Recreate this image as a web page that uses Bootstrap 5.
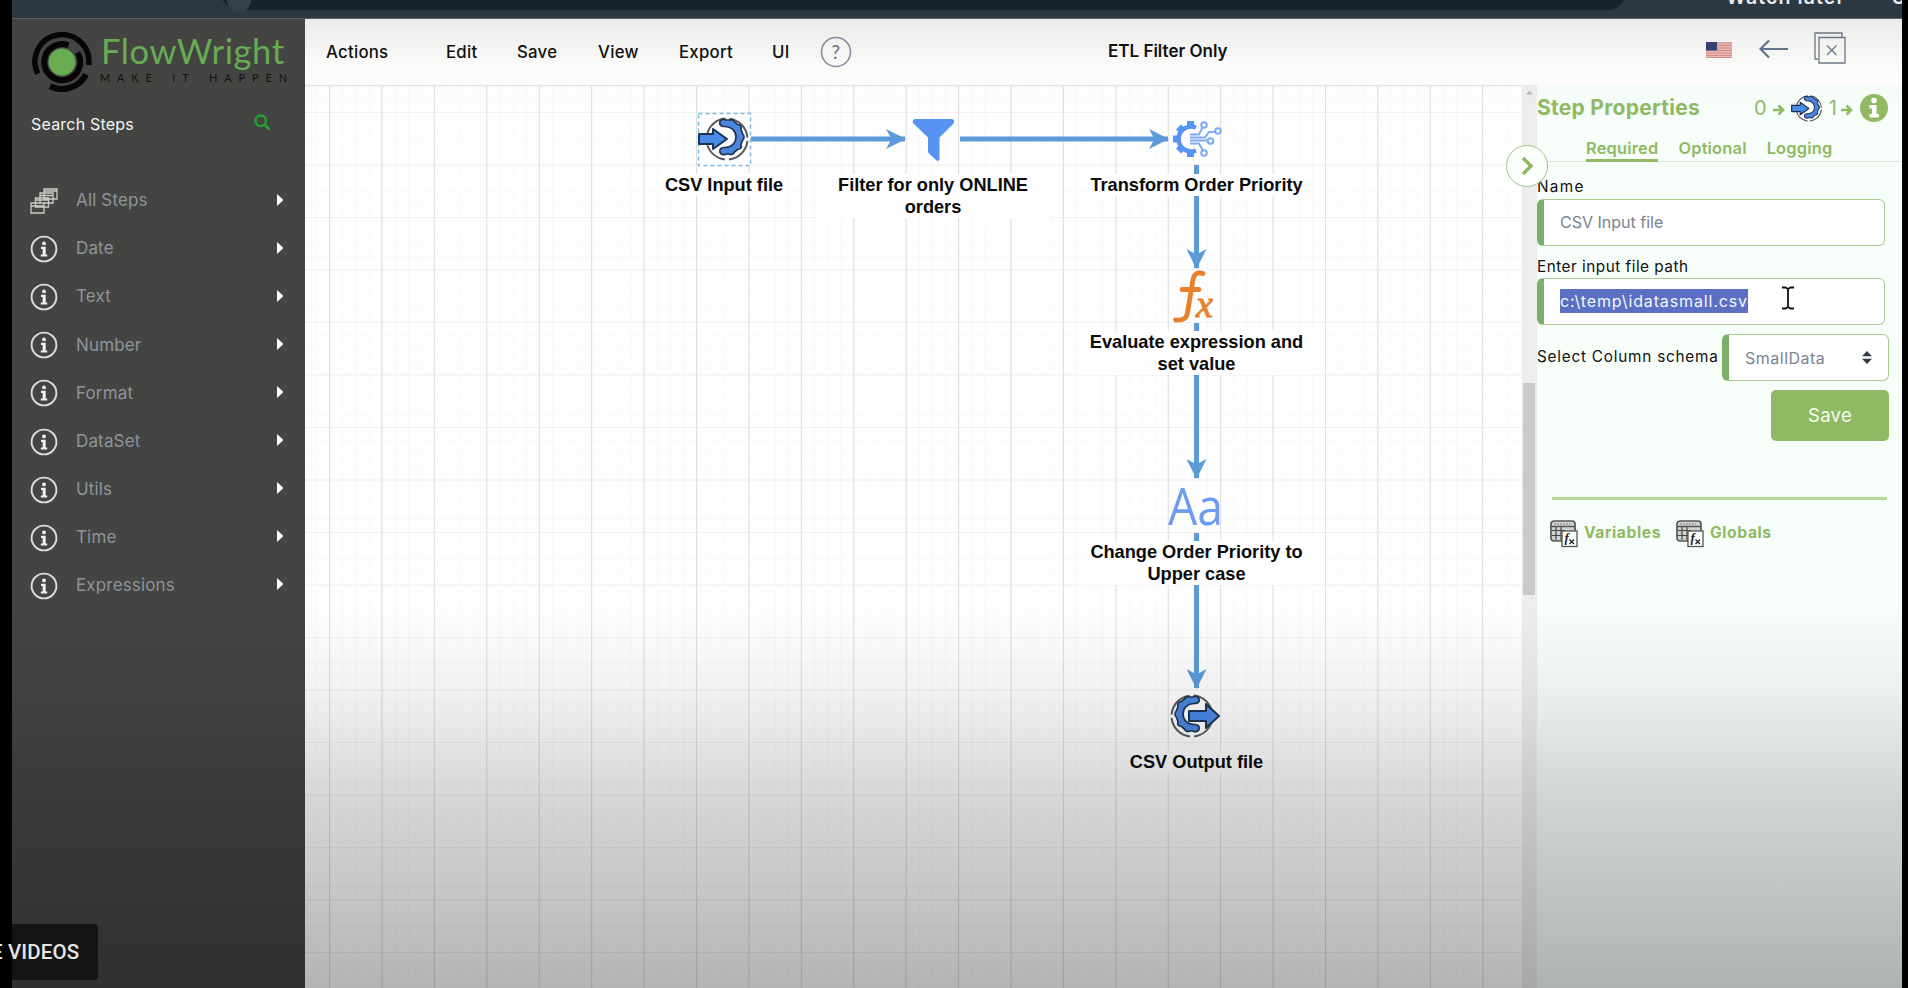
<!DOCTYPE html>
<html lang="en">
<head>
<meta charset="utf-8">
<meta name="viewport" content="width=device-width, initial-scale=1">
<title>FlowWright - ETL Filter Only</title>
<link href="https://cdn.jsdelivr.net/npm/bootstrap@5.3.0/dist/css/bootstrap.min.css" rel="stylesheet">
<style>
  :root { --leaf: #8fba63; --edge: #5b9bd9; }
  body { width: 1908px; height: 988px; overflow: hidden; background: #000; font-family: Inter, "Open Sans", sans-serif; font-size: 17px; color: #111; }
  .stage { width: 1890px; height: 988px; margin-left: 12px; }
  .browser-bar { height: 19px; background: #2c3841; overflow: hidden; border-bottom: 1px solid #59636a; }
  .address { width: 1407px; height: 40px; margin: -30px 0 0 208px; border-radius: 20px; background: #16232b; }
  .address-dot { width: 24px; height: 24px; border-radius: 50%; background: #33414b; margin: 18px 0 0 7px; }
  .watch { color: #e9ecee; font-weight: 600; font-size: 19.500px; line-height: 22px; margin: -14px 0 0 99px; white-space: nowrap; letter-spacing: 1.1px; }
  .share { margin-left: 47px; }
  .steps-bar { width: 293px; background: #444542; }
  .brand-row { height: 80px; padding: 13px 0 0 20px; }
  .brand-name { font-family: Lato, sans-serif; font-size: 34.500px; line-height: 40px; color: #67ab52; letter-spacing: .6px; margin: -1px 0 0 9px; }
  .brand-tag { font-family: Lato, sans-serif; font-size: 11px; line-height: 12px; color: #111; letter-spacing: 6.85px; word-spacing: 4px; margin: 1px 0 0 8px; white-space: nowrap; }
  .search-row { height: 49px; padding: 0 34px 0 19px; color: #f4f4f4; font-size: 16px; letter-spacing: .2px; }
  .step-list { padding-top: 29px; }
  .step-item { height: 48.1px; padding: 0 21px 0 18px; color: #8d949c; }
  .step-item span { margin-left: 18px; letter-spacing: .15px; }
  .step-item svg.ms-auto { margin-top: -3px; }
  .menu-bar { height: 66px; background: #fefefd; }
  .menus { display: grid; grid-template-columns: 120px 71px 81px 81px 93px 48px 32px; padding-left: 21px; width: 803px; line-height: 24px; letter-spacing: .25px; font-weight: 500; font-size: 16.800px; }
  .canvas { width: 1217px; position: relative; overflow: hidden; background-color: #fdfefd; border-top: 1px solid #e3e5e3; }
  .canvas > svg { position: absolute; left: 0; top: -1px; }
  .step-label { position: absolute; width: 234px; transform: translateX(-50%); text-align: center; font: bold 18.2px/22px "Liberation Sans", Arial, sans-serif; color: #0b0b0b; }
  .step-label span { display: inline-block; background: #fdfefd; padding: 0 2px; }
  .step-label.wide span { width: 234px; padding: 0; }
  .rail { width: 15px; background: #ebeeed; }
  .thumb { width: 12px; height: 212px; margin: 298px 0 0 1px; background: #c9cac9; }
  .props { background: #f7fdf9; position: relative; font-size: 15.3px; }
  .toggle { position: absolute; left: -31px; top: 60px; width: 42px; height: 42px; border-radius: 50%; background: #fdfffc; border: 1.5px solid #a3c584; display: flex; align-items: center; justify-content: center; z-index: 3; }
  .props-head { height: 46px; color: var(--leaf); }
  .props-title { font-weight: 700; font-size: 21px; width: 217px; letter-spacing: .28px; }
  .props-count { font-size: 20px; }
  .tab-row { height: 31px; border-bottom: 1px solid #dbe7dc; padding-left: 49px; gap: 20px; color: var(--leaf); font-weight: 600; font-size: 16.4px; line-height: 22px; letter-spacing: .2px; }
  .tab-row div { height: 31px; padding-top: 6px; white-space: nowrap; }
  .tab-row .on { border-bottom: 3px solid var(--leaf); }
  .lbl { line-height: 20px; letter-spacing: .5px; }
  .lbl-name { letter-spacing: 1.3px; }
  .schema { letter-spacing: .78px; white-space: nowrap; }
  .field { width: 348px; height: 47px; background: #fff; border: 1.5px solid #a9cb90; border-left: 7px solid #7bb069; border-radius: 6px; padding-left: 16px; color: #7b8394; font-size: 16px; }
  .picked { background: #5b70c4; color: #f4f6ff; line-height: 24px; letter-spacing: .87px; }
  .btn-save { width: 118px; height: 51px; margin-left: 234px; background: var(--leaf); color: #f6fbf0; font-size: 18.500px; letter-spacing: .3px; border: 0; border-radius: 5px; }
  .rule { height: 3px; width: 335px; margin: 56px 0 0 15px; background: #b7d890; }
  .links { color: var(--leaf); font-weight: 700; font-size: 15.7px; letter-spacing: .55px; padding: 20px 0 0 13px; }
  .shade-top, .shade-bottom { position: absolute; left: 305px; right: 6px; pointer-events: none; z-index: 5; }
  .shade-top { top: 19px; height: 90px; background: linear-gradient(rgba(0,0,0,.08), rgba(0,0,0,.015) 50%, transparent); }
  .shade-bottom { left: 12px; bottom: 0; height: 380px; background: linear-gradient(transparent, rgba(0,0,0,.05) 22%, rgba(0,0,0,.15) 48%, rgba(0,0,0,.29)); }
  .more { position: absolute; left: 0; top: 924px; width: 98px; height: 56px; background: linear-gradient(90deg, #000 12px, #141414 12px); border-radius: 0 4px 4px 0; z-index: 6; overflow: hidden; color: #e6e6e4; font: 500 20.5px/56px Roboto, sans-serif; white-space: nowrap; }
  .more span { margin-left: -9px; letter-spacing: .15px; }
</style>
</head>
<body>
<svg width="0" height="0" class="position-absolute">
  <defs>
    <symbol id="info" viewBox="0 0 28 28"><circle cx="14" cy="14" r="12.4" fill="none" stroke="#dcdedb" stroke-width="1.9"/><circle cx="14" cy="8.4" r="1.9" fill="#f0f0ee"/><path d="M11 11.8h4.7v7.7h1.6v2H10.8v-2h1.8v-5.6H11z" fill="#f0f0ee"/></symbol>
    <symbol id="caret" viewBox="0 0 7 12"><path d="M0 0l6.500 6-6.500 6z" fill="#fff"/></symbol>
    <g id="gear-base">
      <circle r="20.500" fill="#fdfefd" stroke="#5b5b5b" stroke-width="2" stroke-dasharray="28 4.200" stroke-dashoffset="-2"/>
      <path d="M-7-15.500c1-2 4-3 6-1.500h3c2-1 5 0 5.500 2l3 2.500c3 0 4.500 2 3.500 5l1.500 4c2 2 2 5 0 7l-1.500 4c1 3-.500 5-3.500 5l-3 2.500c-.500 2-3.500 3-5.500 2h-3c-2 1.500-5 .500-6-1.500-1-3 1-5 4-5 8 0 12-5 12-10.500s-4-10.500-12-10.500c-3 0-5-2-4-5z" transform="translate(0 -2)" fill="#4a86dd" stroke="#1f3350" stroke-width="1.700"/>
    </g>
    <symbol id="gear-in" viewBox="-29 -23 52 46">
      <use href="#gear-base"/>
      <path d="M-28-5h14v-5L0 0l-14 10V5h-14z" fill="#4a8ae8" stroke="#1f3350" stroke-width="2" stroke-linejoin="round"/>
    </symbol>
    <symbol id="calc" viewBox="0 0 28 28"><rect x="1" y="1" width="24" height="20" rx="3" fill="#cfd3d0" stroke="#555" stroke-width="1.700"/><path d="M1 6.500h24" stroke="#555" stroke-width="1.500"/><path d="M4 4h16" stroke="#888" stroke-dasharray="2 1"/><path d="M2 10.500h13M2 15.500h11M6 7v13M11 7v13" stroke="#444" stroke-width="1.200"/><rect x="12" y="11" width="15" height="15.500" fill="#fff" stroke="#555" stroke-width="1.300"/><text x="14.500" y="22" font-family="Liberation Serif" font-style="italic" font-weight="bold" font-size="13" fill="#222">f</text><path d="M19.500 19.500l4.500 4.500m0-4.500l-4.500 4.500" stroke="#222" stroke-width="1.300"/></symbol>
    <symbol id="go" viewBox="0 0 12 12"><path d="M0 6h9M5.500 1.500L10 6l-4.500 4.500" fill="none" stroke="#8fba63" stroke-width="2.600"/></symbol>
    <marker id="tip" markerUnits="userSpaceOnUse" viewBox="0 0 20 20" markerWidth="20" markerHeight="20" refX="19" refY="10" orient="auto"><path d="M0 0l20 10L0 20l5.500-10z" fill="#5b9bd9"/></marker>
    <pattern id="minor" x="329.500" y="112" width="13.100" height="13.125" patternUnits="userSpaceOnUse"><path d="M.5 0v14M0 .5h14" stroke="#f7f9f7" stroke-width="1"/></pattern>
    <pattern id="major" x="329" y="112" width="52.420" height="52.500" patternUnits="userSpaceOnUse"><path d="M0 .5h53" stroke="#f0f2f0"/><path d="M.5 0v53" stroke="#dcdfdd" stroke-width="1.100"/></pattern>
  </defs>
</svg>

<div class="stage d-flex flex-column">
  <header class="browser-bar d-flex flex-shrink-0">
    <div class="address flex-shrink-0 d-flex"><div class="address-dot"></div></div>
    <div class="watch">Watch later<span class="share">S</span></div>
  </header>

  <div class="d-flex flex-grow-1">
    <aside class="steps-bar flex-shrink-0">
      <div class="brand-row d-flex">
        <svg width="60" height="60" viewBox="0 0 60 60" class="flex-shrink-0" fill="none" stroke="#060606">
          <g transform="translate(30 30)">
            <path d="M-24.200 11.800A27 27 0 1 1 26.700 3" stroke-width="5.500"/>
            <path d="M24 12.500A27 27 0 0 1-12 24.200" stroke-width="6"/>
            <path d="M6.500-16.800A18 18 0 1 0 15.500-9.500" stroke-width="6"/>
            <circle r="13.500" fill="#67ab52" stroke="none"/>
          </g>
        </svg>
        <div>
          <div class="brand-name">FlowWright</div>
          <div class="brand-tag">MAKE IT HAPPEN</div>
        </div>
      </div>
      <div class="search-row d-flex align-items-center justify-content-between">
        <div>Search Steps</div>
        <svg width="17" height="17" viewBox="0 0 17 17" fill="none" stroke="#25a033" style="margin-top:-2px"><circle cx="6.700" cy="6.700" r="5.200" stroke-width="2.500"/><path d="M10.500 10.500l5 5" stroke-width="3"/></svg>
      </div>
      <nav class="step-list">
        <div class="step-item d-flex align-items-center">
          <svg width="28" height="26" viewBox="0 0 28 26" fill="#444542" stroke="#c9cbc8" stroke-width="1.300"><path d="M14 1h13v10H14zM14 3h13M10 5h13v10H10zM10 7.500h13M5.500 10h13v9h-13zM5.500 12h13M1 15h13v10H1zM1 18h13"/></svg>
          <span>All Steps</span><svg class="ms-auto" width="7" height="12"><use href="#caret"/></svg>
        </div>
        <div class="step-item d-flex align-items-center"><svg width="28" height="28"><use href="#info"/></svg><span>Date</span><svg class="ms-auto" width="7" height="12"><use href="#caret"/></svg></div>
        <div class="step-item d-flex align-items-center"><svg width="28" height="28"><use href="#info"/></svg><span>Text</span><svg class="ms-auto" width="7" height="12"><use href="#caret"/></svg></div>
        <div class="step-item d-flex align-items-center"><svg width="28" height="28"><use href="#info"/></svg><span>Number</span><svg class="ms-auto" width="7" height="12"><use href="#caret"/></svg></div>
        <div class="step-item d-flex align-items-center"><svg width="28" height="28"><use href="#info"/></svg><span>Format</span><svg class="ms-auto" width="7" height="12"><use href="#caret"/></svg></div>
        <div class="step-item d-flex align-items-center"><svg width="28" height="28"><use href="#info"/></svg><span>DataSet</span><svg class="ms-auto" width="7" height="12"><use href="#caret"/></svg></div>
        <div class="step-item d-flex align-items-center"><svg width="28" height="28"><use href="#info"/></svg><span>Utils</span><svg class="ms-auto" width="7" height="12"><use href="#caret"/></svg></div>
        <div class="step-item d-flex align-items-center"><svg width="28" height="28"><use href="#info"/></svg><span>Time</span><svg class="ms-auto" width="7" height="12"><use href="#caret"/></svg></div>
        <div class="step-item d-flex align-items-center"><svg width="28" height="28"><use href="#info"/></svg><span>Expressions</span><svg class="ms-auto" width="7" height="12"><use href="#caret"/></svg></div>
      </nav>
    </aside>

    <div class="flex-grow-1 d-flex flex-column">
      <div class="menu-bar d-flex align-items-center flex-shrink-0">
        <nav class="menus align-items-center">
          <div>Actions</div><div>Edit</div><div>Save</div><div>View</div><div>Export</div><div>UI</div>
          <svg width="32" height="32" viewBox="0 0 32 32"><circle cx="16" cy="16" r="14.500" fill="none" stroke="#8b90a5" stroke-width="1.600"/><text x="16" y="22.500" text-anchor="middle" font-family="Lato" font-size="19" fill="#777d94">?</text></svg>
        </nav>
        <div class="fw-semibold">ETL Filter Only</div>
        <div class="d-flex align-items-center ms-auto" style="padding-right:56px">
          <svg width="26" height="16" viewBox="0 0 26 16" style="margin-top:-4px"><path fill="#eec0ba" d="M0 0h26v16H0z"/><path d="M0 1h26M0 3.500h26M0 6h26M0 8.500h26M0 11h26M0 13.500h26M0 15.500h26" stroke="#dc8f89" stroke-width="1.200"/><path fill="#36447a" d="M0 0h11v8.500H0z"/></svg>
          <svg width="29" height="20" viewBox="0 0 29 20" style="margin:-7px 26px 0 27px" fill="none" stroke="#67788f" stroke-width="2.200"><path d="M1 10h28M10 1.500L1.500 10l8.500 8.500"/></svg>
          <svg width="32" height="32" viewBox="0 0 32 32" style="margin-top:-8px" fill="none" stroke="#707b8b" stroke-width="1.300"><path d="M4 27H1V1h27v4"/><path d="M5 5.500h26v25.500H5zM13 13.500l9.500 9.500m0-9.500L13 23" /></svg>
        </div>
      </div>

      <div class="d-flex flex-grow-1">
        <main class="canvas flex-shrink-0">
          <svg width="1217" height="903" viewBox="305 85 1217 903">
            <path fill="url(#minor)" d="M305 85h1217v903H305z"/>
            <path fill="url(#major)" d="M305 85h1217v903H305z"/>
            <g stroke="#5b9bd9" stroke-width="5" fill="none">
              <path d="M751 139h154" marker-end="url(#tip)"/>
              <path d="M960 139h208" marker-end="url(#tip)"/>
              <path d="M1196.500 165v103" marker-end="url(#tip)"/>
              <path d="M1196.500 323v155" marker-end="url(#tip)"/>
              <path d="M1196.500 533v155" marker-end="url(#tip)"/>
            </g>
            <path d="M698.500 113.500h52v52h-52z" fill="#fdfefd" stroke="#7db9e6" stroke-width="1.500" stroke-dasharray="4 3"/>
            <use href="#gear-in" x="698" y="116" width="52" height="46"/>
            <path d="M915 119h37c2 0 3 3 1.500 4.500L939.500 137.500V159c0 2-2 2.500-3 1.500l-7.500-7c-1-1-1-2-1-3V137.500L913.500 123.500c-1.500-1.500-.5-4.500 1.500-4.500z" fill="#5794f2"/>
            <g fill="none" stroke="#7eaaf3" stroke-width="2">
              <path d="M1196 127.500A12.500 12.500 0 1 0 1196 150.500" stroke="#5794f2" stroke-width="4.500"/>
              <path d="M1190.500 126v-5M1190.500 152v5M1179 139h-6M1182.500 131l-4-4M1182.500 147l-4 4" stroke="#5794f2" stroke-width="7"/>
              <path d="M1190 134.500h9l3.500-7M1190 137.500h15l4-5.500h6M1190 140.500h17M1190 143.500h9l4 7"/>
              <circle cx="1204" cy="125" r="2.800"/><circle cx="1218" cy="131" r="2.800"/><circle cx="1210.500" cy="141" r="2.800"/><circle cx="1204" cy="153" r="2.800"/>
            </g>
            <g fill="#e8812d" stroke="#e8812d" font-family="DejaVu Serif" font-style="italic"><text x="1196" y="317" font-size="38" font-family="Liberation Serif" stroke-width="1">x</text></g>
            <path d="M1203 273.500c-6-2-9 1-10 6l-5.500 33c-1 6-4 8-12 7.500M1182 289.500h17" fill="none" stroke="#e8812d" stroke-width="4.800" stroke-linecap="round"/>
            <text x="1168" y="525" font-family="Open Sans" font-weight="400" font-size="52" fill="#6b9cf0" textLength="55" lengthAdjust="spacingAndGlyphs">Aa</text>
            <use href="#gear-base" transform="translate(1192 716) scale(-1 1)"/>
            <path transform="translate(1192 716)" d="M-3-5h17v-7L27 0 14 12V5H-3z" fill="#4a8ae8" stroke="#1f3350" stroke-width="2" stroke-linejoin="round"/>
          </svg>
          <div class="step-label" style="left:419px;top:88px"><span>CSV Input file</span></div>
          <div class="step-label wide" style="left:628px;top:88px"><span>Filter for only ONLINE orders</span></div>
          <div class="step-label" style="left:891.500px;top:88px"><span>Transform Order Priority</span></div>
          <div class="step-label wide" style="left:891.500px;top:245px"><span>Evaluate expression and set value</span></div>
          <div class="step-label wide" style="left:891.500px;top:455px"><span>Change Order Priority to Upper case</span></div>
          <div class="step-label" style="left:891.500px;top:665px"><span>CSV Output file</span></div>
        </main>

        <div class="rail flex-shrink-0">
          <svg class="d-block position-absolute" width="15" height="14"><path d="M4 9.500l3.500-4 3.500 4z" fill="#b5b8b6"/></svg>
          <div class="d-flex"><div class="thumb"></div></div>
        </div>

        <section class="props flex-grow-1">
          <div class="toggle"><svg width="14" height="20" viewBox="0 0 14 20"><path d="M3 2l8 8-8 8" fill="none" stroke="#8fba63" stroke-width="3.500"/></svg></div>
          <div class="props-head d-flex align-items-center">
            <div class="props-title">Step Properties</div>
            <div class="props-count">0</div>
            <svg class="mt-1" width="12" height="12" style="margin-left:6px"><use href="#go"/></svg>
            <svg width="32" height="29" style="margin-left:6px" viewBox="-29 -23 52 46"><use href="#gear-in" x="-29" y="-23" width="52" height="46"/></svg>
            <div class="props-count" style="margin-left:6px">1</div>
            <svg class="mt-1" width="12" height="12" style="margin-left:4px"><use href="#go"/></svg>
            <svg width="28" height="28" viewBox="0 0 28 28" style="margin-left:7px"><circle cx="14" cy="14" r="14" fill="#8fba63"/><circle cx="14" cy="6.500" r="2.800" fill="#fff"/><path d="M9.500 11h7v9h2.500v3.500H9.500V20H12v-5.500H9.500z" fill="#fff"/></svg>
          </div>
          <div class="tab-row d-flex"><div class="on">Required</div><div>Optional</div><div>Logging</div></div>
          <div class="lbl lbl-name" style="padding-top:15px">Name</div>
          <div class="field d-flex align-items-center" style="margin-top:2px;padding-bottom:2px">CSV Input file</div>
          <div class="lbl" style="margin-top:11px">Enter input file path</div>
          <div class="field d-flex align-items-center" style="margin-top:1px;padding-bottom:1px"><span class="picked">c:\temp\idatasmall.csv</span>
            <svg width="14" height="24" viewBox="0 0 14 24" style="margin:-6px 0 0 33px" fill="none" stroke="#111" stroke-width="1.800"><path d="M1 1.500h3.500L7 3l2.500-1.500H13M1 22.500h3.500L7 21l2.500 1.500H13M7 3v18"/></svg></div>
          <div class="d-flex align-items-center" style="margin-top:9px"><div class="schema" style="width:185px">Select Column schema</div>
            <div class="field d-flex align-items-center justify-content-between" style="width:167px;padding-right:15px;letter-spacing:.5px">SmallData
              <svg width="12" height="13" viewBox="0 0 12 13" fill="#333b44"><path d="M6 0l5 5.300H1zM6 13l5-5.300H1z"/></svg></div></div>
          <button class="btn btn-save d-block" style="margin-top:9px">Save</button>
          <div class="rule"></div>
          <div class="links d-flex align-items-center">
            <svg width="28" height="28"><use href="#calc"/></svg><span style="width:79px;margin:-2px 13px 0 6px">Variables</span>
            <svg width="28" height="28"><use href="#calc"/></svg><span style="margin:-2px 0 0 6px">Globals</span>
          </div>
        </section>
      </div>
    </div>
  </div>
</div>
<div class="shade-top"></div>
<div class="shade-bottom"></div>
<div class="more"><span>E VIDEOS</span></div>
<script src="https://cdn.jsdelivr.net/npm/bootstrap@5.3.0/dist/js/bootstrap.bundle.min.js"></script>
</body>
</html>
